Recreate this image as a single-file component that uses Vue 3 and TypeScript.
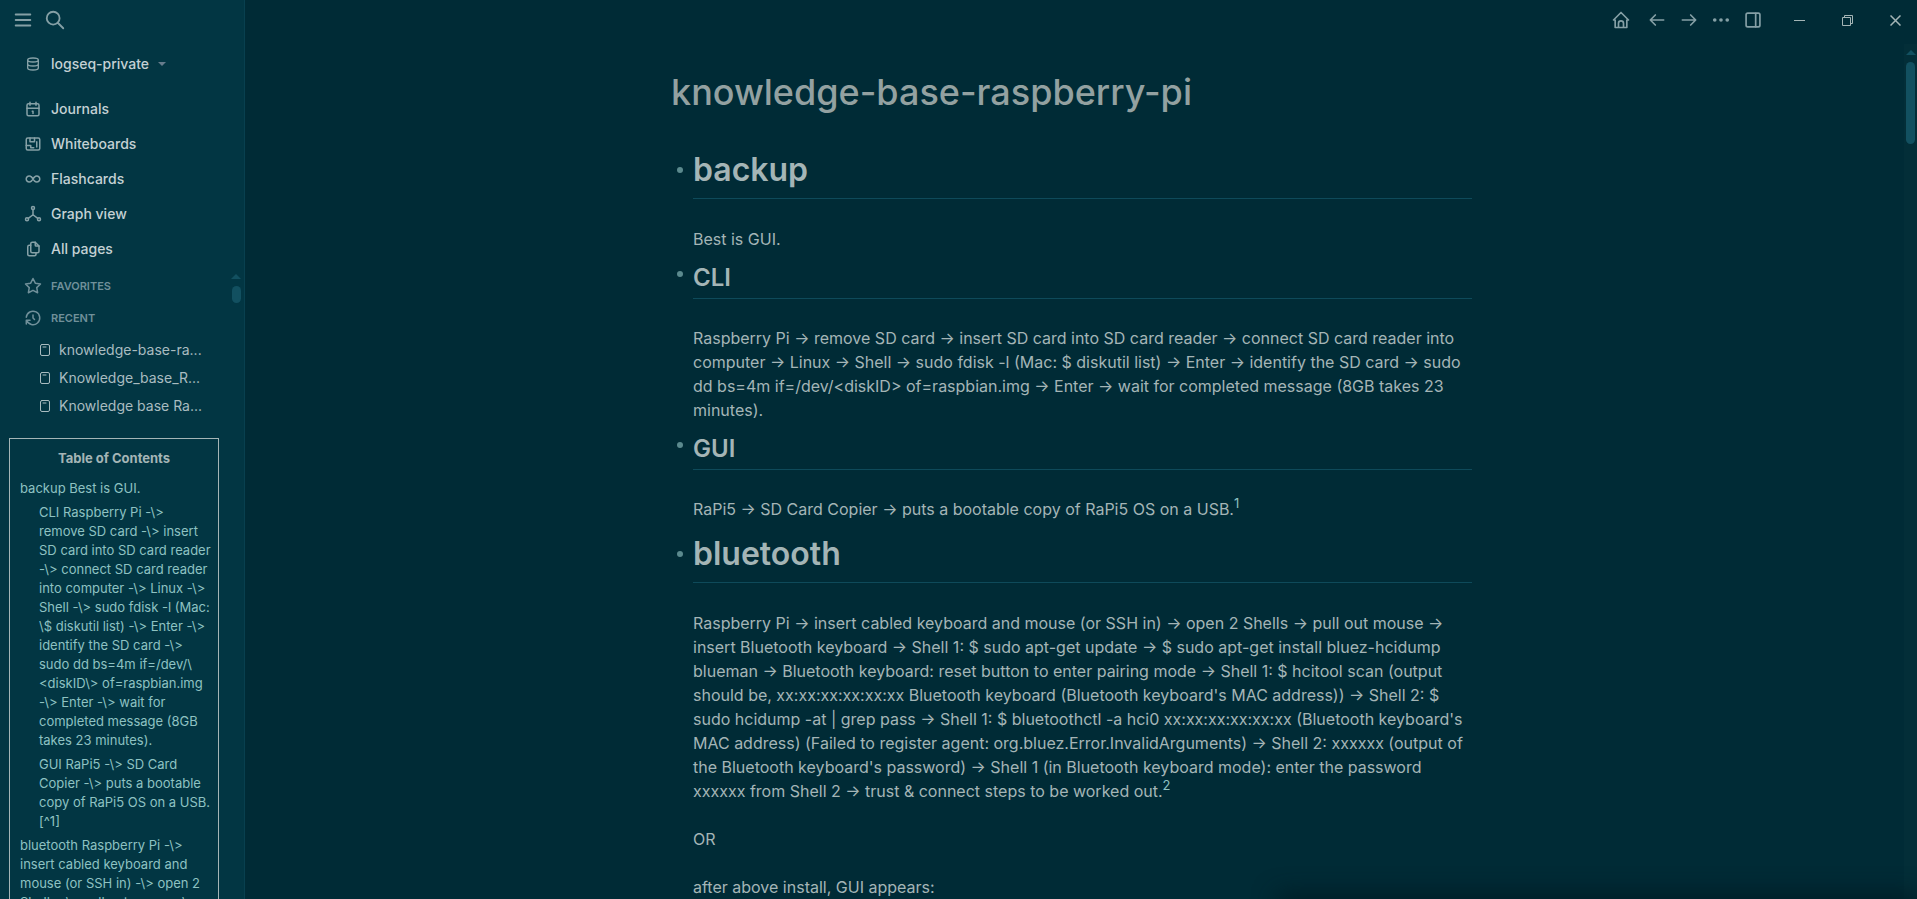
<script setup lang="ts">
interface NavItem { label: string; icon: string[] }
interface TocItem { text: string; level: number }
interface Block { title: string; level: 1 | 2; paragraphs: { text: string; note?: number }[] }

const nav: NavItem[] = [
  { label: 'Journals', icon: ['M6 5h12a2 2 0 0 1 2 2v12a2 2 0 0 1 -2 2h-12a2 2 0 0 1 -2 -2v-12a2 2 0 0 1 2 -2z', 'M16 3v4M8 3v4M4 11h16', 'M11 15h1v3'] },
  { label: 'Whiteboards', icon: ['M5 4h14a2 2 0 0 1 2 2v12a2 2 0 0 1 -2 2h-14a2 2 0 0 1 -2 -2v-12a2 2 0 0 1 2 -2z', 'M8 4v5h6v-5M17 9v7', 'M3 14h6v3h4'] },
  { label: 'Flashcards', icon: ['M9.8 9.2a4 4 0 1 0 0 5.6a10 10 0 0 0 2.2 -2.8a10 10 0 0 1 2.2 -2.8a4 4 0 1 1 0 5.6a10 10 0 0 1 -2.2 -2.8a10 10 0 0 0 -2.2 -2.8'] },
  { label: 'Graph view', icon: ['M2 19a2 2 0 1 0 4 0a2 2 0 1 0 -4 0M18 19a2 2 0 1 0 4 0a2 2 0 1 0 -4 0M10 4a2 2 0 1 0 4 0a2 2 0 1 0 -4 0', 'M12 6v7M5.7 17.800l6.300 -4.800l6.300 4.800'] },
  { label: 'All pages', icon: ['M15 3v4a1 1 0 0 0 1 1h4', 'M18 17h-7a2 2 0 0 1 -2 -2v-10a2 2 0 0 1 2 -2h4l5 5v7a2 2 0 0 1 -2 2z', 'M16 17v2a2 2 0 0 1 -2 2h-7a2 2 0 0 1 -2 -2v-10a2 2 0 0 1 2 -2h2'] },
]

const recent = ['knowledge-base-ra...', 'Knowledge_base_R...', 'Knowledge base Ra...']

// Word joiners keep each "-\>" arrow whole; zero-width spaces mark the extra break points.
const arrows = (s: string) => s.replace(/-\\>/g, '-\u2060\\>').replace('/\\<', '/\\\u200b<').replace('[^', '\u200b[^')

const toc: TocItem[] = [
  { level: 1, text: 'backup Best is GUI.' },
  { level: 2, text: 'CLI Raspberry Pi -\\> remove SD card -\\> insert SD card into SD card reader -\\> connect SD card reader into computer -\\> Linux -\\> Shell -\\> sudo fdisk -l (Mac: \\$ diskutil list) -\\> Enter -\\> identify the SD card -\\> sudo dd bs=4m if=/dev/\\<diskID\\> of=raspbian.img -\\> Enter -\\> wait for completed message (8GB takes 23 minutes).' },
  { level: 2, text: 'GUI RaPi5 -\\> SD Card Copier -\\> puts a bootable copy of RaPi5 OS on a USB.[^1]' },
  { level: 1, text: 'bluetooth Raspberry Pi -\\> insert cabled keyboard and mouse (or SSH in) -\\> open 2 Shells -\\> pull out mouse -\\>' },
]

const blocks: Block[] = [
  { level: 1, title: 'backup', paragraphs: [{ text: 'Best is GUI.' }] },
  { level: 2, title: 'CLI', paragraphs: [{ text: 'Raspberry Pi → remove SD card → insert SD card into SD card reader → connect SD card reader into computer → Linux → Shell → sudo fdisk -l (Mac: $ diskutil list) → Enter → identify the SD card → sudo dd bs=4m if=/dev/<diskID> of=raspbian.img → Enter → wait for completed message (8GB takes 23 minutes).' }] },
  { level: 2, title: 'GUI', paragraphs: [{ text: 'RaPi5 → SD Card Copier → puts a bootable copy of RaPi5 OS on a USB.', note: 1 }] },
  {
    level: 1,
    title: 'bluetooth',
    paragraphs: [
      { text: "Raspberry Pi → insert cabled keyboard and mouse (or SSH in) → open 2 Shells → pull out mouse → insert Bluetooth keyboard → Shell 1: $ sudo apt-get update → $ sudo apt-get install bluez-hcidump blueman → Bluetooth keyboard: reset button to enter pairing mode → Shell 1: $ hcitool scan (output should be, xx:xx:xx:xx:xx:xx Bluetooth keyboard (Bluetooth keyboard's MAC address)) → Shell 2: $ sudo hcidump -at | grep pass → Shell 1: $ bluetoothctl -a hci0 xx:xx:xx:xx:xx:xx (Bluetooth keyboard's MAC address) (Failed to register agent: org.bluez.Error.InvalidArguments) → Shell 2: xxxxxx (output of the Bluetooth keyboard's password) → Shell 1 (in Bluetooth keyboard mode): enter the password xxxxxx from Shell 2 → trust & connect steps to be worked out.", note: 2 },
      { text: 'OR' },
      { text: 'after above install, GUI appears:' },
    ],
  },
]
</script>

<template>
  <div class="app">
    <aside class="sidebar">
      <div class="side-head">
        <button class="icon-btn" aria-label="Toggle sidebar">
          <svg width="22" height="22" viewBox="0 0 24 24"><path d="M4 6h16M4 12h16M4 18h16" /></svg>
        </button>
        <button class="icon-btn" aria-label="Search">
          <svg width="22" height="22" viewBox="0 0 24 24"><path d="M3 10a7 7 0 1 0 14 0a7 7 0 1 0 -14 0M21 21l-6 -6" /></svg>
        </button>
      </div>
      <button class="row repo">
        <svg width="16" height="16" viewBox="0 0 24 24"><path d="M4 6a8 3 0 1 0 16 0a8 3 0 1 0 -16 0M4 6v6a8 3 0 0 0 16 0v-6M4 12v6a8 3 0 0 0 16 0v-6" /></svg>
        <span>logseq-private</span>
        <i class="caret"></i>
      </button>
      <nav class="nav">
        <a v-for="n in nav" :key="n.label" class="row" href="#">
          <svg width="18" height="18" viewBox="0 0 24 24"><path v-for="d in n.icon" :key="d" :d="d" /></svg>
          <span>{{ n.label }}</span>
        </a>
      </nav>
      <div class="side-scroll">
        <div class="side-content">
          <h2 class="group">
            <svg width="18" height="18" viewBox="0 0 24 24"><path d="M12 17.75l-6.172 3.245l1.179 -6.873l-5 -4.867l6.9 -1l3.086 -6.253l3.086 6.253l6.9 1l-5 4.867l1.179 6.873z" /></svg>
            <span>FAVORITES</span>
          </h2>
          <h2 class="group">
            <svg width="18" height="18" viewBox="0 0 24 24"><path d="M12 8v4l2 2M3.050 11a9 9 0 1 1 .5 4m-.5 5v-5h5" /></svg>
            <span>RECENT</span>
          </h2>
          <ul class="recent">
            <li v-for="r in recent" :key="r">
              <a href="#">
                <svg width="12" height="14" viewBox="0 0 12 14"><rect x="1.500" y="1.500" width="9" height="11" rx="1.500" /><path d="M4 4h3" /></svg>
                <span>{{ r }}</span>
              </a>
            </li>
          </ul>
          <section class="toc">
            <h3>Table of Contents</h3>
            <a v-for="t in toc" :key="t.text" href="#" :class="'lv' + t.level">{{ arrows(t.text) }}</a>
          </section>
        </div>
        <div class="scrollbar side-bar"><i class="up"></i><i class="thumb"></i></div>
      </div>
    </aside>

    <div class="main">
      <header class="topbar">
        <button class="icon-btn home" aria-label="Home">
          <svg width="20" height="20" viewBox="0 0 24 24"><path d="M5 12h-2l9 -9l9 9h-2v9h-14zM9 21v-5a3 3 0 0 1 6 0v5" /></svg>
        </button>
        <button class="icon-btn" aria-label="Back">
          <svg width="20" height="20" viewBox="0 0 24 24"><path d="M4 12h16M4 12l6 6M4 12l6 -6" /></svg>
        </button>
        <button class="icon-btn" aria-label="Forward">
          <svg width="20" height="20" viewBox="0 0 24 24"><path d="M4 12h16M14 18l6 -6M14 6l6 6" /></svg>
        </button>
        <button class="icon-btn" aria-label="More">
          <svg width="20" height="20" viewBox="0 0 24 24" class="solid"><circle cx="4.500" cy="12" r="2.200" /><circle cx="12" cy="12" r="2.200" /><circle cx="19.500" cy="12" r="2.200" /></svg>
        </button>
        <button class="icon-btn" aria-label="Toggle right sidebar">
          <svg width="20" height="20" viewBox="0 0 24 24"><rect x="3.700" y="3.700" width="16.600" height="16.600" rx="2" /><path d="M15.200 4v16" /></svg>
        </button>
        <div class="win">
          <button class="icon-btn" aria-label="Minimize">
            <svg width="11" height="11" viewBox="0 0 11 11"><path d="M0 5.500h11" /></svg>
          </button>
          <button class="icon-btn" aria-label="Restore">
            <svg width="11" height="11" viewBox="0 0 11 11"><path d="M.5 2.500h8v8h-8zM2.500 2.500v-2h8v8h-2" /></svg>
          </button>
          <button class="icon-btn" aria-label="Close">
            <svg class="close" width="11" height="11" viewBox="0 0 11 11"><path d="M.5 .5l10 10M10.500 .5l-10 10" /></svg>
          </button>
        </div>
      </header>
      <div class="scroll">
        <main class="page">
          <h1 class="title">knowledge-base-raspberry-pi</h1>
          <article v-for="b in blocks" :key="b.title" class="block" :class="'b' + b.level">
            <i class="bullet"></i>
            <div class="body">
              <component :is="'h' + b.level">{{ b.title }}</component>
              <p v-for="p in b.paragraphs" :key="p.text">{{ p.text }}<sup v-if="p.note"><a href="#">{{ p.note }}</a></sup></p>
            </div>
          </article>
        </main>
        <div class="scrollbar main-bar"><i class="up"></i><i class="thumb"></i></div>
      </div>
      <div class="shade"></div>
    </div>
  </div>
</template>

<style>
html, body { background: #002b36; }
body { margin: 0; overflow: hidden; }
</style>

<style scoped>
.app {
  display: flex;
  height: 100vh;
  overflow: hidden;
  background: #002b36;
  color: #a4b5b6;
  font: 16px/24px Inter, "Liberation Sans", sans-serif;
}
h1, h2, h3, p, ul { margin: 0; padding: 0; font-size: inherit; font-weight: inherit; }
ul { list-style: none; }
a { color: inherit; text-decoration: none; }
button { border: 0; padding: 0; background: none; color: inherit; font: inherit; cursor: pointer; }
svg { flex: none; display: block; fill: none; stroke: currentColor; stroke-width: 2; stroke-linecap: round; stroke-linejoin: round; }
.solid { fill: currentColor; stroke: none; }
.icon-btn { display: flex; align-items: center; justify-content: center; }

.sidebar {
  flex: none;
  box-sizing: border-box;
  width: 245px;
  display: flex;
  flex-direction: column;
  background: #023643;
  border-right: 1px solid #08404f;
}
.side-head { display: flex; gap: 10px; height: 40px; padding-left: 12px; color: #85a0a6; }
.row { display: flex; align-items: center; gap: 9px; height: 35px; padding-left: 24px; color: #c4d1d4; font-size: 14px; font-weight: 500; }
.row svg { width: 18px; color: #86a1a7; }
.repo { height: 48px; }
.caret { border: 4px solid transparent; border-top-color: #667c8c; border-bottom: 0; }
.nav { margin-top: 3px; }
.side-scroll { flex: 1; min-height: 0; display: flex; margin-top: -1px; }
.side-content { flex: 1; min-width: 0; padding-top: 5px; overflow: hidden; }
.group { display: flex; align-items: center; gap: 9px; height: 32px; padding-left: 24px; color: #70909a; font-size: 11px; font-weight: 600; }
.recent { padding-top: 2px; }
.recent a { display: flex; align-items: center; gap: 8px; height: 28px; padding-left: 39px; color: #a9bcc0; font-size: 14px; }
.recent svg { stroke-width: 1; }
.toc { margin: 18px 9px 0 9px; height: 600px; border: 1px solid #a4b5b6; padding: 10px 6px 0 10px; font-size: 13px; line-height: 19px; color: #8ec2c2; }
.toc h3 { margin-bottom: 11px; padding-right: 4px; color: #a4b5b6; text-align: center; font-weight: 700; }
.toc a { display: block; margin-bottom: 5px; }
.toc .lv2 { margin-left: 19px; }

.scrollbar { flex: none; display: flex; flex-direction: column; align-items: center; }
.up { border: 5px solid transparent; border-bottom-color: #125060; border-top: 0; }
.thumb { width: 9px; margin-top: 7px; border-radius: 5px; background: #125060; }
.side-bar { width: 16px; padding-top: 9px; }
.side-bar .thumb { height: 17px; }
.main-bar { width: 13px; padding-top: 6px; background: #032e38; }
.main-bar .thumb { height: 82px; }

.main { position: relative; flex: 1; min-width: 0; display: flex; flex-direction: column; }
.topbar { flex: none; display: flex; align-items: center; justify-content: flex-end; gap: 12px; height: 40px; margin-bottom: 4px; padding-right: 16px; color: #85a0a6; }
.home { margin-right: 4px; }
.win { display: flex; gap: 37px; margin-left: 19px; color: #a4b5b6; }
.win svg { stroke-width: 1; stroke-linecap: butt; stroke-linejoin: miter; }
.win .close { stroke-width: 1.5; }
.scroll { flex: 1; min-height: 0; display: flex; }
.page { flex: 1; min-width: 0; max-width: 801px; margin: 0 auto; padding: 24px 6px 0 0; overflow: hidden; }
.title { margin-bottom: 21px; font-size: 36px; line-height: 48px; font-weight: 500; color: #93a1a1; }
.block { display: flex; gap: 10px; padding-top: 9px; }
.bullet { flex: none; width: 6px; height: 6px; margin: 21px 0 0 6px; border-radius: 50%; background: #5b8a8e; }
.b2 .bullet { margin-top: 11px; }
.body { flex: 1; min-width: 0; }
.body h1, .body h2 { border-bottom: 1px solid #0e4a5a; font-weight: 600; }
.body h1 { margin-bottom: 28px; font-size: 32px; line-height: 48px; padding-bottom: 4px; }
.body h2 { margin-bottom: 27px; font-size: 24px; line-height: 36px; padding-bottom: 2px; }
p + p { margin-top: 24px; }
sup { vertical-align: 7px; font-size: 13px; line-height: 0; color: #8ec2c2; }
.shade { position: absolute; left: 62%; right: 0; bottom: -12px; height: 12px; box-shadow: 0 0 24px 4px #001a22; pointer-events: none; }
</style>
